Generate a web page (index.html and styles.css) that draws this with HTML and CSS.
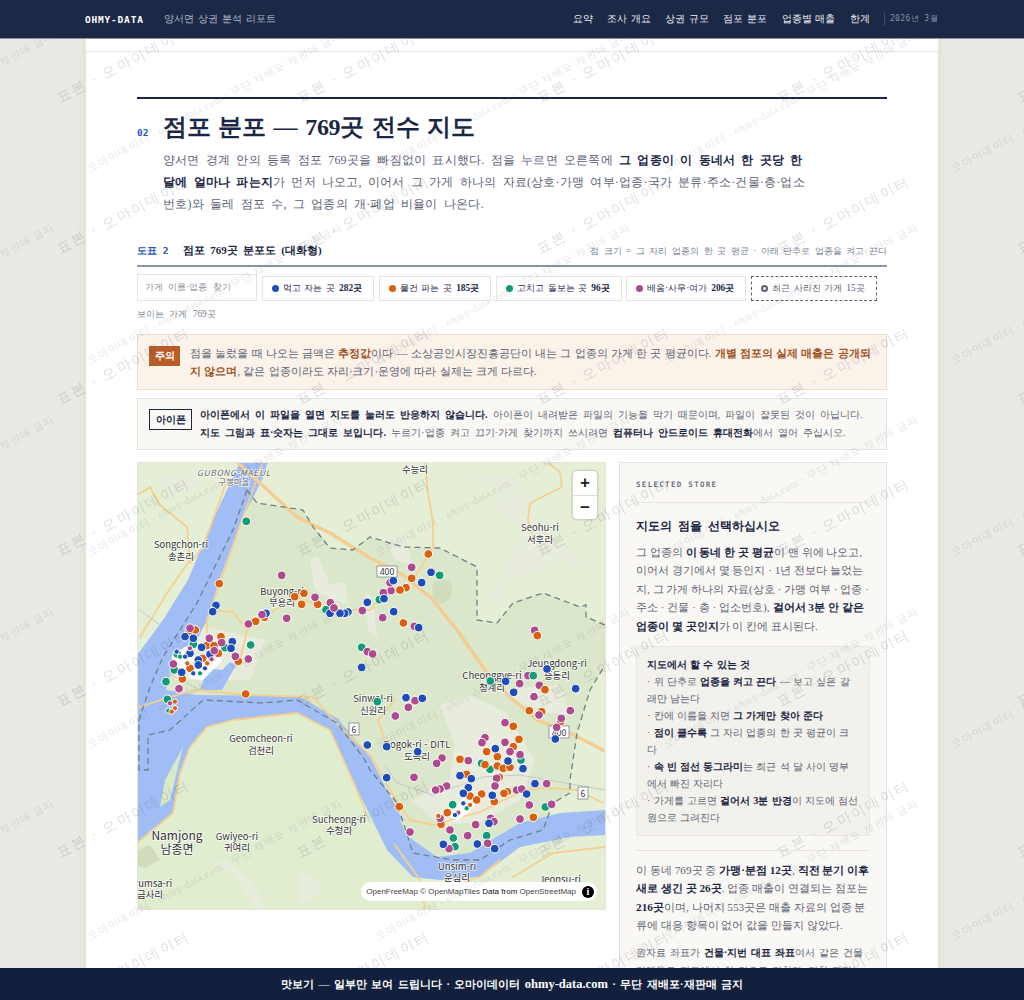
FILE: index.html
```html
<!DOCTYPE html>
<html lang="ko">
<head>
<meta charset="utf-8">
<title>양서면 상권 분석 리포트</title>
<link rel="stylesheet" href="styles.css">
</head>
<body>
<nav class="nav">
  <span class="logo">OHMY-DATA</span>
  <span class="nav-sub">양서면 상권 분석 리포트</span>
  <div class="nav-links">
    <a>요약</a><a>조사 개요</a><a>상권 규모</a><a>점포 분포</a><a>업종별 매출</a><a>한계</a>
  </div>
  <span class="nav-date">2026년 3월</span>
</nav>

<div class="sheet">
  <div class="strip"></div>
  <main class="content">
    <section class="sec-head">
      <div class="title-row">
        <span class="sec-no">02</span>
        <h1>점포 분포 — 769곳 전수 지도</h1>
      </div>
      <p class="intro">양서면 경계 안의 등록 점포 769곳을 빠짐없이 표시했다. 점을 누르면 오른쪽에 <b>그 업종이 이 동네서 한 곳당 한 달에 얼마나 파는지</b>가 먼저 나오고, 이어서 그 가게 하나의 자료(상호·가맹 여부·업종·국가 분류·주소·건물·층·업소번호)와 둘레 점포 수, 그 업종의 개·폐업 비율이 나온다.</p>
    </section>

    <div class="fig-head">
      <span class="fig-no">도표 2</span>
      <span class="fig-title">점포 769곳 분포도 (대화형)</span>
      <span class="fig-note">점 크기 = 그 자리 업종의 한 곳 평균 · 아래 단추로 업종을 켜고 끈다</span>
    </div>

    <div class="controls">
      <div class="search">가게 이름·업종 찾기</div>
      <div class="chip"><i class="dot blue"></i><span>먹고 자는 곳 <b>282곳</b></span></div>
      <div class="chip"><i class="dot orange"></i><span>물건 파는 곳 <b>185곳</b></span></div>
      <div class="chip"><i class="dot green"></i><span>고치고 돌보는 곳 <b>96곳</b></span></div>
      <div class="chip"><i class="dot purple"></i><span>배움·사무·여가 <b>206곳</b></span></div>
      <div class="chip chip-gone"><i class="dot ring"></i><span>최근 사라진 가게 15곳</span></div>
    </div>
    <div class="count">보이는 가게 769곳</div>

    <div class="callout warn">
      <span class="badge-warn">주의</span>
      <p>점을 눌렀을 때 나오는 금액은 <b>추정값</b>이다 — 소상공인시장진흥공단이 내는 그 업종의 가게 한 곳 평균이다. <b>개별 점포의 실제 매출은 공개되지 않으며</b>, 같은 업종이라도 자리·크기·운영에 따라 실제는 크게 다르다.</p>
    </div>
    <div class="callout note">
      <span class="badge-note">아이폰</span>
      <p><b>아이폰에서 이 파일을 열면 지도를 눌러도 반응하지 않습니다.</b> 아이폰이 내려받은 파일의 기능을 막기 때문이며, 파일이 잘못된 것이 아닙니다. <b>지도 그림과 표·숫자는 그대로 보입니다.</b> 누르기·업종 켜고 끄기·가게 찾기까지 쓰시려면 <b>컴퓨터나 안드로이드 휴대전화</b>에서 열어 주십시오.</p>
    </div>

    <div class="map-grid">
      <div class="map">
        <svg class="map-svg" viewBox="138 463 467 446" width="467" height="446" aria-label="양서면 지도">
          <rect class="land-light" x="137" y="462" width="468" height="447"/>
          <path class="land-dark" d="M247 490 L257 503 L303 510 L313 527 L330 548 L353 550 L370 537 L403 547 L440 548 L477 567 L477 620 L497 623 L513 603 L543 593 L580 607 L586 605 L586 617 L605 625 L605 665 L590 690 L577 733 L570 780 L570 793 L553 803 L543 830 L510 840 L480 860 L413 853 L397 803 L363 757 L337 723 L297 700 L203 700 L170 730 L150 690 L163 657 L197 603 L233 530 Z"/>
          <path class="land-south" d="M137 843 L173 813 L180 773 L190 747 L207 727 L233 720 L297 713 L330 730 L357 790 L387 850 L413 877 L440 909 L137 909 Z"/>
          <path class="forest" d="M432 585 Q440 575 450 582 Q455 595 448 600 Q440 608 434 602 Z"/>
          <path class="forest" d="M137 850 L150 845 L160 860 L145 868 L137 866 Z"/>
          <g class="urban">
            <path d="M490 505 L506 492 L520 498 L516 482 L530 490 L534 515 L555 540 L585 560 L575 568 L555 556 L540 572 L510 580 L495 605 L488 600 L508 560 L522 530 Z"/>
            <path d="M470 475 L510 497 L520 485 L512 474 Z"/>
            <path d="M310 560 L318 556 L330 585 L345 582 L348 605 L330 598 L315 590 Z"/>
            <path d="M365 590 L372 600 L378 640 L368 630 Z"/>
            <path d="M165 640 L195 625 L265 640 L250 680 L175 680 Z"/>
            <path d="M440 705 L470 695 L505 712 L535 760 L520 800 L480 822 L440 825 L412 800 L450 780 L455 745 Z"/>
            <path d="M215 865 L225 858 L255 885 L265 909 L255 909 L235 875 Z"/>
            <path d="M300 870 L325 888 L300 905 Z"/>
            <path d="M495 690 L560 685 L570 715 L540 712 Z"/>
            <path d="M385 535 L405 535 L412 565 L395 560 Z"/>
            <path d="M160 480 L200 470 L195 490 L170 495 Z"/>
          </g>
          <path class="river" d="M240 462 L268 462 L262 480 L243 517 L221 575 L207 620 L197 640 L182 652 L172 668 L166 690 L197 695 L297 696 L337 718 L370 757 L387 790 L400 815 L413 840 L437 857 L470 853 L503 833 L520 823 L560 813 L605 810 L605 835 L570 837 L520 847 L480 877 L440 880 L413 877 L387 850 L365 805 L357 790 L330 730 L297 713 L233 720 L207 727 L190 747 L180 773 L173 813 L137 843 L137 655 L163 620 L188 580 L213 520 Z"/>
          <path class="river" d="M207 668 L222 670 L230 662 L236 665 L222 690 L200 690 Z"/>
          <path class="isle" d="M400 820 L427 830 L423 843 L407 837 Z"/>
          <path class="isle" d="M183 747 L176 775 L170 800 L160 807 L165 780 Z"/>
          <path class="rail" d="M137 608 L160 625 M165 672 L200 690 M300 697 L340 720 M397 783 L433 795 L483 777 L520 775 L605 790 M385 765 L397 783"/>
          <path class="road thin" d="M137 495 L150 487 L160 505 L187 527 L190 560 L167 593 L140 637 M227 480 L203 547 L190 563 M207 620 L210 610 L233 612 L247 630 L270 613 L297 597 L330 610 L370 610 L385 590 M247 630 L240 660 M425 462 L428 493 L433 523 L433 547 L415 577 M547 462 L560 472 L562 487 L530 503 L528 520 L532 533 M263 462 L243 517 L220 583 L207 620 L206 670 M137 708 L170 697 L197 690 L247 695 L313 697 L340 727 L370 755 L390 790 L410 820 L433 825 L480 812 L525 790 L547 788 L577 790 L603 803 M137 843 L173 813 L180 773 L190 747 L207 727 L233 720 L297 713 L330 730 L357 790 L367 815 M395 845 L420 880 L425 909 M513 877 L553 853 L605 847 M440 890 L480 877 L500 860 M395 700 L378 720 L385 740"/>
          <path class="road wide" d="M237 462 L297 517 L330 533 L370 558 L403 575 L430 597 L457 630 L487 673 L510 697 L537 720 L570 733 L603 750"/>
          <path class="border" d="M247 480 L247 490 L233 530 L197 603 L163 657 L150 687 L139 720 L139 770 L148 770 L148 735 L170 730 L203 700 L263 703 L297 700 L337 723 L363 757 L370 770 L397 803 L413 853 L453 860 L480 860 L510 840 L543 830 L553 803 L570 793 L570 780 L577 733 L590 690 L605 665"/>
          <path class="border" d="M247 490 L257 503 L303 510 L313 527 L330 548 L353 550 L370 537 L403 547 L440 548 L477 567 L477 620 L497 623 L513 603 L543 593 L580 607 L586 605 L586 617 L605 625"/>
          <g class="shield">
            <rect x="377" y="566" width="20" height="11"/><text x="387" y="575">400</text>
            <rect x="349" y="723" width="10" height="12"/><text x="354" y="733">6</text>
            <rect x="578" y="787" width="10" height="12"/><text x="583" y="797">6</text>
            <rect x="549" y="726" width="20" height="12"/><text x="559" y="736">400</text>
          </g>
          <g class="labels">
            <text class="it" x="234" y="476">GUBONG-MAEUL</text>
            <text class="sm" x="234" y="485">구봉마을</text>
            <text x="181" y="548">Songchon-ri</text><text x="181" y="560">송촌리</text>
            <text x="282" y="595">Buyong-ri</text><text x="282" y="606">부용리</text>
            <text x="415" y="473">수능리</text>
            <text x="540" y="531">Seohu-ri</text><text x="540" y="543">서후리</text>
            <text x="557" y="667">Jeungdong-ri</text><text x="557" y="679">증동리</text>
            <text x="492" y="679">Cheonggye-ri</text><text x="492" y="691">청계리</text>
            <text x="373" y="702">Sinwol-ri</text><text x="373" y="714">신원리</text>
            <text x="417" y="748">Dogok-ri - DITL</text><text x="417" y="760">도곡리</text>
            <text x="261" y="742">Geomcheon-ri</text><text x="261" y="754">검천리</text>
            <text x="339" y="823">Sucheong-ri</text><text x="339" y="834">수청리</text>
            <text class="lg" x="177" y="840">Namjong</text><text class="lg" x="177" y="854">남종면</text>
            <text x="237" y="840">Gwiyeo-ri</text><text x="237" y="851">귀여리</text>
            <text x="150" y="887">Jeumsa-ri</text><text x="150" y="898">금사리</text>
            <text x="457" y="870">Unsim-ri</text><text x="457" y="881">운심리</text>
            <text x="560" y="883">Jeonsu-ri</text>
          </g>
          <g class="dots" transform="translate(130 460) scale(.3333)">
            <path class="blob" d="M130 590 L170 565 L190 590 L170 625 L140 610 Z M190 635 L260 580 L270 600 L215 655 L185 650 Z"/>
            <g class="o">
              <circle cx="268" cy="371"/><circle cx="494" cy="410"/><circle cx="522" cy="400"/><circle cx="515" cy="433"/><circle cx="563" cy="433"/><circle cx="403" cy="472"/><circle cx="377" cy="484"/><circle cx="178" cy="513"/><circle cx="196" cy="510"/><circle cx="273" cy="530"/><circle cx="230" cy="557"/><circle cx="252" cy="557"/><circle cx="265" cy="580"/><circle cx="325" cy="604"/><circle cx="157" cy="657"/><circle cx="347" cy="702"/><circle cx="218" cy="595"/><circle cx="180" cy="625"/>
            </g>
            <g class="g">
              <circle cx="349" cy="184"/><circle cx="588" cy="449"/><circle cx="362" cy="555"/><circle cx="285" cy="563"/><circle cx="695" cy="562"/><circle cx="108" cy="665"/><circle cx="142" cy="582"/><circle cx="133" cy="630"/><circle cx="190" cy="553"/><circle cx="112" cy="718"/>
            </g>
            <g class="b">
              <circle cx="258" cy="436"/><circle cx="248" cy="455"/><circle cx="408" cy="460"/><circle cx="712" cy="427"/><circle cx="654" cy="456"/><circle cx="644" cy="460"/><circle cx="630" cy="460"/><circle cx="600" cy="460"/><circle cx="190" cy="535"/><circle cx="165" cy="530"/><circle cx="307" cy="545"/><circle cx="303" cy="565"/><circle cx="240" cy="583"/><circle cx="205" cy="600"/><circle cx="205" cy="615"/><circle cx="155" cy="637"/><circle cx="215" cy="562"/><circle cx="180" cy="580"/>
            </g>
            <g class="p">
              <circle cx="455" cy="346"/><circle cx="396" cy="464"/><circle cx="355" cy="492"/><circle cx="470" cy="475"/><circle cx="555" cy="412"/><circle cx="601" cy="428"/><circle cx="612" cy="444"/><circle cx="697" cy="452"/><circle cx="238" cy="535"/><circle cx="275" cy="548"/><circle cx="253" cy="572"/><circle cx="316" cy="589"/><circle cx="355" cy="597"/><circle cx="130" cy="612"/><circle cx="147" cy="686"/><circle cx="180" cy="505"/><circle cx="712" cy="575"/>
            </g>
            <g class="tiny">
              <circle class="b" cx="140" cy="575"/><circle class="g" cx="150" cy="590"/><circle class="b" cx="165" cy="590"/><circle class="p" cx="180" cy="565"/><circle class="o" cx="172" cy="610"/><circle class="b" cx="190" cy="640"/><circle class="g" cx="210" cy="640"/><circle class="b" cx="225" cy="625"/><circle class="o" cx="232" cy="610"/><circle class="p" cx="245" cy="598"/><circle class="o" cx="135" cy="725"/><circle class="p" cx="120" cy="730"/><circle class="o" cx="135" cy="745"/><circle class="g" cx="115" cy="752"/><circle class="o" cx="125" cy="755"/>
            </g>
          </g>
          <g class="dots" transform="translate(370 460) scale(.3333)">
            <g class="p">
              <circle cx="125" cy="322"/><circle cx="63" cy="392"/><circle cx="40" cy="398"/><circle cx="38" cy="473"/><circle cx="133" cy="499"/><circle cx="494" cy="511"/><circle cx="474" cy="647"/><circle cx="449" cy="671"/><circle cx="508" cy="676"/><circle cx="491" cy="710"/><circle cx="8" cy="582"/><circle cx="60" cy="368"/>
            </g>
            <g class="o">
              <circle cx="175" cy="282"/><circle cx="125" cy="355"/><circle cx="108" cy="383"/><circle cx="90" cy="390"/><circle cx="100" cy="489"/><circle cx="502" cy="527"/><circle cx="525" cy="689"/>
            </g>
            <g class="g">
              <circle cx="209" cy="346"/><circle cx="28" cy="419"/><circle cx="361" cy="663"/><circle cx="490" cy="647"/>
            </g>
            <g class="b">
              <circle cx="183" cy="337"/><circle cx="155" cy="368"/><circle cx="70" cy="362"/><circle cx="42" cy="416"/><circle cx="71" cy="455"/><circle cx="146" cy="503"/><circle cx="531" cy="627"/><circle cx="407" cy="664"/><circle cx="431" cy="697"/><circle cx="617" cy="686"/><circle cx="108" cy="712"/><circle cx="157" cy="714"/>
            </g>
          </g>
          <g class="dots" transform="translate(370 690) scale(.3333)">
            <path class="blob" d="M245 375 L290 320 L320 330 L290 365 L260 385 Z"/>
            <g class="g">
              <circle cx="22" cy="35"/><circle cx="335" cy="220"/><circle cx="360" cy="238"/><circle cx="453" cy="210"/><circle cx="248" cy="344"/><circle cx="526" cy="351"/><circle cx="250" cy="444"/><circle cx="255" cy="470"/><circle cx="350" cy="437"/>
            </g>
            <g class="o">
              <circle cx="430" cy="109"/><circle cx="447" cy="148"/><circle cx="430" cy="170"/><circle cx="350" cy="185"/><circle cx="382" cy="200"/><circle cx="382" cy="228"/><circle cx="400" cy="235"/><circle cx="345" cy="224"/><circle cx="420" cy="232"/><circle cx="270" cy="208"/><circle cx="478" cy="62"/><circle cx="515" cy="65"/><circle cx="572" cy="95"/><circle cx="388" cy="262"/><circle cx="335" cy="312"/><circle cx="412" cy="305"/><circle cx="402" cy="310"/><circle cx="373" cy="335"/><circle cx="88" cy="350"/><circle cx="232" cy="368"/><circle cx="212" cy="388"/><circle cx="213" cy="403"/><circle cx="490" cy="382"/><circle cx="300" cy="318"/><circle cx="320" cy="330"/><circle cx="290" cy="253"/>
            </g>
            <g class="p">
              <circle cx="405" cy="98"/><circle cx="345" cy="143"/><circle cx="336" cy="158"/><circle cx="405" cy="157"/><circle cx="420" cy="185"/><circle cx="450" cy="194"/><circle cx="295" cy="212"/><circle cx="216" cy="204"/><circle cx="200" cy="220"/><circle cx="132" cy="262"/><circle cx="230" cy="288"/><circle cx="210" cy="297"/><circle cx="197" cy="300"/><circle cx="135" cy="32"/><circle cx="115" cy="52"/><circle cx="76" cy="78"/><circle cx="492" cy="20"/><circle cx="507" cy="75"/><circle cx="574" cy="85"/><circle cx="601" cy="62"/><circle cx="560" cy="112"/><circle cx="380" cy="265"/><circle cx="375" cy="288"/><circle cx="440" cy="300"/><circle cx="455" cy="297"/><circle cx="530" cy="281"/><circle cx="478" cy="345"/><circle cx="545" cy="343"/><circle cx="450" cy="387"/><circle cx="120" cy="426"/><circle cx="240" cy="420"/><circle cx="293" cy="437"/><circle cx="317" cy="404"/><circle cx="362" cy="385"/><circle cx="372" cy="395"/><circle cx="353" cy="460"/><circle cx="237" cy="476"/><circle cx="210" cy="385"/>
            </g>
            <g class="b">
              <circle cx="376" cy="176"/><circle cx="414" cy="213"/><circle cx="459" cy="236"/><circle cx="143" cy="185"/><circle cx="50" cy="170"/><circle cx="50" cy="263"/><circle cx="270" cy="257"/><circle cx="304" cy="266"/><circle cx="295" cy="293"/><circle cx="280" cy="310"/><circle cx="367" cy="316"/><circle cx="495" cy="281"/><circle cx="470" cy="312"/><circle cx="556" cy="147"/><circle cx="108" cy="23"/><circle cx="157" cy="25"/><circle cx="220" cy="463"/><circle cx="322" cy="462"/><circle cx="374" cy="476"/><circle cx="357" cy="400"/><circle cx="-8" cy="165"/><circle cx="-25" cy="-68"/>
            </g>
            <g class="tiny">
              <circle class="b" cx="280" cy="340"/><circle class="o" cx="300" cy="345"/><circle class="p" cx="265" cy="368"/><circle class="b" cx="255" cy="375"/><circle class="g" cx="290" cy="355"/><circle class="o" cx="205" cy="378"/>
            </g>
          </g>
        </svg>
        <div class="zoom-box"><span>+</span><span>−</span></div>
        <div class="attrib"><span>OpenFreeMap © OpenMapTiles <b>Data from</b> OpenStreetMap</span><i>i</i></div>
      </div>

      <aside class="panel">
        <div class="panel-kicker">SELECTED STORE</div>
        <h2>지도의 점을 선택하십시오</h2>
        <p>그 업종의 <b>이 동네 한 곳 평균</b>이 맨 위에 나오고, 이어서 경기에서 몇 등인지 · 1년 전보다 늘었는지, 그 가게 하나의 자료(상호 · 가맹 여부 · 업종 · 주소 · 건물 · 층 · 업소번호), <b>걸어서 3분 안 같은 업종이 몇 곳인지</b>가 이 칸에 표시된다.</p>
        <div class="how">
          <div class="how-title">지도에서 할 수 있는 것</div>
          <div>· 위 단추로 <b>업종을 켜고 끈다</b> — 보고 싶은 갈래만 남는다</div>
          <div>· 칸에 이름을 치면 <b>그 가게만 찾아 준다</b></div>
          <div>· <b>점이 클수록</b> 그 자리 업종의 한 곳 평균이 크다</div>
          <div>· <b>속 빈 점선 동그라미</b>는 최근 석 달 사이 명부에서 빠진 자리다</div>
          <div>· 가게를 고르면 <b>걸어서 3분 반경</b>이 지도에 점선 원으로 그려진다</div>
        </div>
        <div class="panel-rule"></div>
        <p>이 동네 769곳 중 <b>가맹·분점 12곳</b>, <b>직전 분기 이후 새로 생긴 곳 26곳</b>. 업종 매출이 연결되는 점포는 <b>216곳</b>이며, 나머지 553곳은 매출 자료의 업종 분류에 대응 항목이 없어 값을 만들지 않았다.</p>
        <p class="tail">원자료 좌표가 <b>건물·지번 대표 좌표</b>여서 같은 건물 가게들은 지도에서 한 점으로 겹친다. 겹친 자리는 조금씩 벌려 놓았다.</p>
      </aside>
    </div>
  </main>
</div>

<svg class="watermark" width="1024" height="1000" aria-hidden="true">
  <defs>
    <pattern id="wm-big" width="240" height="151" patternUnits="userSpaceOnUse">
      <text class="wm-a" transform="rotate(-28 60 103)" x="60" y="103">표본 · 오마이데이터</text>
    </pattern>
    <pattern id="wm-small" width="288" height="192" patternUnits="userSpaceOnUse" patternTransform="translate(85 -3)">
      <text class="wm-b" transform="rotate(-28 5 175)" x="5" y="175">오마이데이터 · ohmy-data.com · 무단 재배포·재판매 금지</text>
    </pattern>
  </defs>
  <rect width="1024" height="1000" fill="url(#wm-small)"/>
  <rect width="1024" height="1000" fill="url(#wm-big)"/>
</svg>

<footer class="banner">맛보기 — 일부만 보여 드립니다 · 오마이데이터 <span class="banner-url">ohmy-data.com</span> · 무단 재배포·재판매 금지</footer>
</body>
</html>
```

FILE: styles.css
```css
* { box-sizing: border-box; }
html, body { margin: 0; height: 100%; }
body {
  height: 1000px;
  overflow: hidden;
  background: #ebe9e3;
  color: #5a6273;
  font-family: "Liberation Serif", serif;
  font-size: 11px;
  display: flex;
  flex-direction: column;
}
b { color: #1a2744; font-weight: 700; }
i { font-style: normal; }

.nav {
  height: 39px;
  flex: none;
  background: #1b2846;
  border-bottom: 1px solid #8a93a5;
  display: flex;
  align-items: center;
  padding: 0 86px 0 85px;
  position: relative;
  z-index: 10;
}
.logo { font: 700 9.5px "DejaVu Sans Mono", monospace; letter-spacing: .8px; color: #fff; margin-right: 20px; }
.nav-sub { font-size: 10px; word-spacing: 1.5px; color: #b4bccb; }
.nav-links { margin-left: auto; display: flex; gap: 14.5px; font-size: 10px; word-spacing: 1.2px; color: #eef0f4; }
.nav-date {
  margin-left: 14px;
  padding-left: 5px;
  border-left: 1px solid #3c4a68;
  font: 8px/14px "DejaVu Sans Mono", monospace;
  letter-spacing: .4px;
  color: #8993a8;
}

.sheet {
  width: 852px;
  margin-left: 86px;
  flex: 1;
  background: #fff;
  box-shadow: 0 0 10px rgba(60, 55, 40, .08);
  overflow: hidden;
}
.strip { height: 13px; border-bottom: 1px solid #e9e7e1; }
.content { padding: 45px 51px 0; }

.sec-head { border-top: 2px solid #1a2744; padding-top: 9px; }
.title-row { display: flex; align-items: flex-end; }
.sec-no { width: 26px; padding-bottom: 7px; font: 700 9.5px/12px "DejaVu Sans Mono", monospace; color: #2b55c0; }
h1 {
  margin: 0;
  font: 700 24px/38px "Liberation Serif", serif;
  letter-spacing: -.3px;
  word-spacing: 2.2px;
  color: #1a2744;
}
.intro { margin: 3px 0 0 26px; width: 644px; font-size: 12px; letter-spacing: .2px; word-spacing: 3px; line-height: 22px; }

.fig-head {
  margin-top: 27px;
  display: flex;
  align-items: baseline;
  line-height: 16px;
  border-bottom: 2px solid #8b94a6;
  height: 25px;
}
.fig-no { font: 700 9.5px/16px "DejaVu Sans Mono", monospace; color: #2b55c0; width: 46px; }
.fig-title { font-size: 11px; word-spacing: 2.5px; font-weight: 700; color: #1a2744; }
.fig-note { margin-left: auto; font-size: 9.4px; word-spacing: 2.2px; color: #7a8292; }

.controls { display: flex; gap: 4.5px; margin-top: 7px; align-items: flex-end; }
.search {
  flex: none;
  width: 120px;
  height: 27px;
  border: 1px solid #e6e3da;
  padding-left: 7px;
  font-size: 9.4px;
  word-spacing: 3px;
  line-height: 25px;
  color: #8b919c;
  background: #fff;
}
.chip {
  flex: none;
  height: 25px;
  padding: 0 11px 0 9px;
  border: 1px solid #e6e3da;
  display: flex;
  align-items: center;
  gap: 3px;
  font-size: 9.4px;
  word-spacing: 1.5px;
  color: #1a2744;
  background: #fff;
  white-space: nowrap;
}
.chip-gone { border: 1px dashed #5a6273; color: #5a6273; }
.dot { width: 7px; height: 7px; border-radius: 50%; margin-right: 1px; flex: none; }
.blue { background: #1e4db7; }
.orange { background: #d9600f; }
.green { background: #0f9b74; }
.purple { background: #ad4a90; }
.ring { border: 2px solid #5a6273; }
.count { margin-top: 5px; font-size: 9.4px; word-spacing: 3px; line-height: 16px; color: #7a8292; }

.callout { display: flex; border: 1px solid; margin-top: 12px; padding: 9px 11px; }
.callout p { margin: 0; line-height: 18px; }
.warn { background: #fbf2ea; border-color: #efdcc6; }
.warn p { font-size: 11px; word-spacing: .5px; }
.warn b { color: #a3541f; }
.note { margin-top: 8px; padding: 7px 18px 7px 11px; background: #faf8f4; border-color: #e6e3da; }
.note p { font-size: 10.4px; word-spacing: 2.4px; }
.badge-warn {
  flex: none;
  width: 31px;
  height: 20px;
  margin: 2px 10px 0 0;
  background: #b85c28;
  color: #fff;
  font-size: 10px;
  font-weight: 700;
  text-align: center;
  line-height: 20px;
}
.badge-note {
  flex: none;
  width: 43px;
  height: 21px;
  margin: 3px 8px 0 0;
  border: 1px solid #1a2744;
  color: #1a2744;
  font-size: 10px;
  font-weight: 700;
  text-align: center;
  line-height: 19px;
}

.map-grid { display: flex; gap: 13px; align-items: flex-start; margin-top: 12px; }
.map {
  position: relative;
  flex: none;
  width: 469px;
  height: 448px;
  border: 1px solid #e6e3da;
}
.map-svg { display: block; }
.land-light { fill: #e4efd6; }
.land-dark { fill: #dbe7cb; }
.land-south { fill: #e0edcf; }
.forest { fill: #d1dcbc; }
.urban { fill: #e8ecdd; }
.river { fill: #a0bdf6; }
.isle { fill: #d9e8c6; }
.rail { fill: none; stroke: #c5c9c5; stroke-width: 1; }
.road { fill: none; stroke-linejoin: round; stroke-linecap: round; }
.thin { stroke: #f5d08d; stroke-width: 1.8; }
.wide { stroke: #f5cd92; stroke-width: 3.5; }
.border { fill: none; stroke: #6f8087; stroke-width: 1.3; stroke-dasharray: 6 4; }
.shield rect { fill: #fff; stroke: #7d8387; stroke-width: .8; }
.shield text { font: 8.5px "Noto Sans", sans-serif; fill: #333; text-anchor: middle; }
.labels text {
  font: 9.5px "Noto Sans CJK KR", "Noto Sans", sans-serif;
  fill: #333;
  text-anchor: middle;
  stroke: rgba(255, 255, 255, .8);
  stroke-width: 1.6px;
  paint-order: stroke;
}
.labels .lg { font-size: 12px; }
.labels .it { font-style: italic; font-size: 8.5px; letter-spacing: .6px; fill: #666; }
.labels .sm { font-size: 8.5px; fill: #666; }
.dots circle { r: 13px; stroke: #fff; stroke-width: 3px; }
.dots .tiny circle { r: 8px; stroke-width: 3px; }
.blob { fill: #fff; stroke: #fff; stroke-width: 12px; stroke-linejoin: round; }
.dots .o { fill: #d9600f; }
.dots .g { fill: #0f9b74; }
.dots .b { fill: #1e4db7; }
.dots .p { fill: #ad4a90; }

.zoom-box {
  position: absolute;
  top: 8px;
  right: 8px;
  width: 24px;
  height: 48px;
  background: #fff;
  border-radius: 4px;
  box-shadow: 0 0 0 1.5px rgba(0, 0, 0, .1);
  display: flex;
  flex-direction: column;
  font: 700 17px/24px "Liberation Sans", sans-serif;
  color: #222;
  text-align: center;
}
.zoom-box span { height: 24px; }
.zoom-box span + span { border-top: 1px solid #ddd; }
.attrib {
  position: absolute;
  right: 8px;
  bottom: 8px;
  height: 19px;
  padding: 0 3px 0 5px;
  background: #fff;
  border-radius: 10px;
  display: flex;
  align-items: center;
  gap: 6px;
  font: 8px "Liberation Sans", sans-serif;
  color: #444;
  white-space: nowrap;
}
.attrib b { font-weight: 400; color: #111; }
.attrib i {
  width: 12px;
  height: 12px;
  border-radius: 50%;
  background: #000;
  color: #fff;
  font: 700 10px/12px "Liberation Serif", serif;
  text-align: center;
}

.panel {
  flex: 1;
  height: 560px;
  background: #faf8f4;
  border: 1px solid #e6e3da;
  padding: 16px 16px 0;
}
.panel-kicker {
  font: 700 7.5px/12px "DejaVu Sans Mono", monospace;
  letter-spacing: 1.3px;
  color: #6a7284;
  padding-bottom: 11px;
  border-bottom: 1px solid #e9e6de;
}
.panel h2 { margin: 13px 0 7px; font-size: 12.4px; word-spacing: 3px; line-height: 20px; font-weight: 700; color: #1a2744; }
.panel p { margin: 0; font-size: 11.25px; line-height: 18.4px; }
.how {
  margin-top: 11px;
  padding: 9px 10px 9px;
  background: #f3f1ec;
  border: 1px solid #e9e6de;
  font-size: 10.4px;
  word-spacing: .6px;
  line-height: 17px;
}
.how-title { font-weight: 700; color: #1a2744; }
.panel-rule { height: 1px; background: #e6e3da; margin: 14px 0 10px; }
.panel .tail { margin-top: 9px; font-size: 10.4px; word-spacing: 1.3px; }

.watermark { position: fixed; left: 0; top: 0; z-index: 5; pointer-events: none; }
.wm-a { font: 14px "Liberation Serif", serif; letter-spacing: 2.3px; fill: #4a5060; opacity: .19; }
.wm-b { font: 10.5px "Liberation Serif", serif; letter-spacing: .5px; fill: #4a5060; opacity: .15; }

.banner {
  position: fixed;
  left: 0;
  right: 0;
  bottom: 0;
  height: 32px;
  background: #13203d;
  color: #fff;
  font: 700 11px/32px "Liberation Serif", serif;
  word-spacing: 1.7px;
  text-align: center;
  z-index: 10;
}
.banner-url { font-size: 12.5px; }
```
